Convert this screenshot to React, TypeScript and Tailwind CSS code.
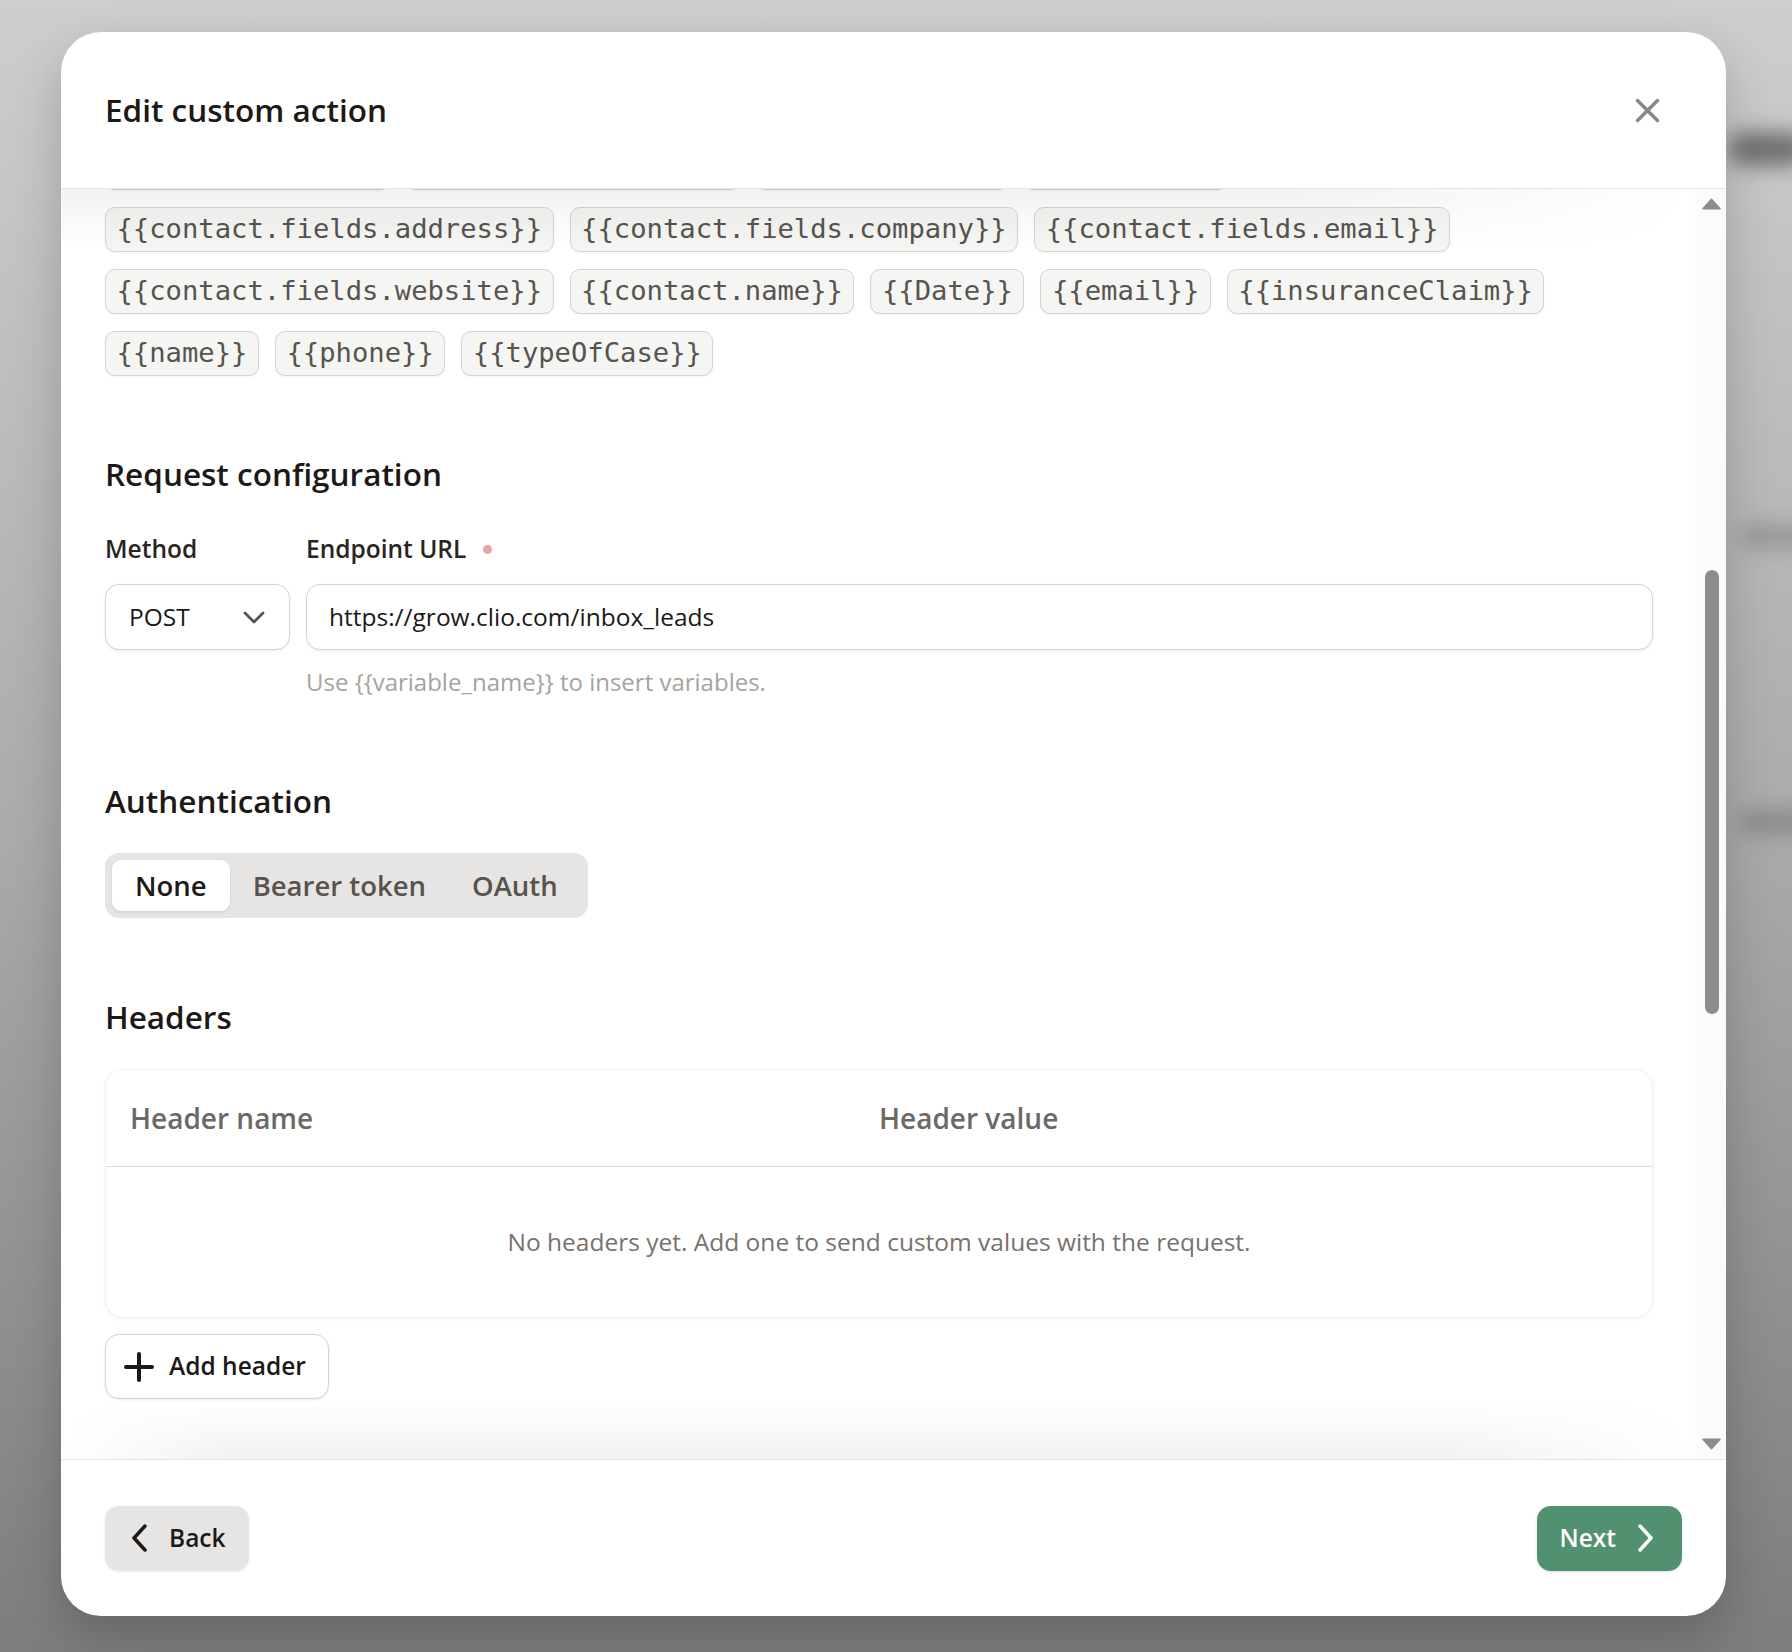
import { useState } from "react";

const hiddenRow = ["{{accidentDate}}", "{{caseDescription}}", "{{clientType}}", "{{company}}"];

const variables = [
  "{{contact.fields.address}}",
  "{{contact.fields.company}}",
  "{{contact.fields.email}}",
  "{{contact.fields.website}}",
  "{{contact.name}}",
  "{{Date}}",
  "{{email}}",
  "{{insuranceClaim}}",
  "{{name}}",
  "{{phone}}",
  "{{typeOfCase}}",
];

const authModes = ["None", "Bearer token", "OAuth"];

function Chip({ label }: { label: string }) {
  return (
    <span className="flex h-[45px] items-center rounded-[10px] border border-[#d6d3d1] bg-[#f5f5f4] px-[10.5px] font-['DejaVu_Sans_Mono',monospace] text-[27.2px] text-[#57534e] shadow-[0_1px_2px_rgba(0,0,0,0.06)]">
      {label}
    </span>
  );
}

function SectionTitle({ children }: { children: string }) {
  return <h3 className="text-[31.5px] font-semibold leading-[40px] text-[#1c1917]">{children}</h3>;
}

function Chevron({ dir, className }: { dir: "left" | "right"; className?: string }) {
  return (
    <svg viewBox="0 0 18 30" className={className} fill="none" stroke="currentColor" strokeWidth={3.5} strokeLinecap="round" strokeLinejoin="round">
      <path d={dir === "left" ? "M15 3 L4 15 L15 27" : "M3 3 L14 15 L3 27"} />
    </svg>
  );
}

export default function App() {
  const [auth, setAuth] = useState("None");

  return (
    <div className="relative min-h-screen w-full overflow-hidden bg-gradient-to-b from-[#cfcecc] via-[#acabaa] to-[#7d7d7d] pl-[61px] pt-[32px] font-['Open_Sans',sans-serif]">
      {/* blurred page behind the dialog */}
      <div className="pointer-events-none absolute left-[1728px] top-[132px] h-[34px] w-[80px] rounded-full bg-[#707070] blur-[10px]" />
      <div className="pointer-events-none absolute left-[1740px] top-[524px] h-[24px] w-[70px] rounded-full bg-[#979797] blur-[10px]" />
      <div className="pointer-events-none absolute left-[1740px] top-[810px] h-[24px] w-[70px] rounded-full bg-[#8a8a8a] blur-[10px]" />

      <div className="relative flex h-[1584px] w-[1665px] flex-col overflow-hidden rounded-[40px] bg-white shadow-[0_20px_50px_rgba(0,0,0,0.2)]">
        <div className="flex h-[157px] shrink-0 items-center justify-between border-b border-[#e7e5e4] pl-[44px] pr-[57px]">
          <h2 className="text-[31.5px] font-semibold leading-[40px] text-[#1c1917]">Edit custom action</h2>
          <button className="flex h-[44px] w-[44px] items-center justify-center text-[#8a8784]">
            <svg viewBox="0 0 25 25" className="h-[25px] w-[25px]" fill="none" stroke="currentColor" strokeWidth={3.5} strokeLinecap="round">
              <path d="M2.5 2.5 L22.5 22.5 M22.5 2.5 L2.5 22.5" />
            </svg>
          </button>
        </div>

        <div className="relative flex min-h-0 flex-1">
          <div className="min-w-0 flex-1 overflow-hidden pl-[44px] pr-[42px]">
            <div className="-mt-[44px] mb-[17px] flex gap-x-[16px]">
              {hiddenRow.map((v) => (
                <Chip key={v} label={v} />
              ))}
            </div>
            <div className="flex flex-wrap gap-x-[16px] gap-y-[17px]">
              {variables.map((v) => (
                <Chip key={v} label={v} />
              ))}
            </div>

            <section className="mt-[78px]">
              <SectionTitle>Request configuration</SectionTitle>
              <div className="mt-[40px] grid grid-cols-[185px_1fr] gap-x-[16px]">
                <label className="text-[24.5px] font-semibold leading-[30px] text-[#292524]">Method</label>
                <label className="flex items-center text-[24.5px] font-semibold leading-[30px] text-[#292524]">
                  Endpoint URL
                  <span className="ml-[17px] h-[9px] w-[9px] rounded-full bg-[#eba4a4]" />
                </label>
                <div className="mt-[20px] flex h-[66px] items-center justify-between rounded-[14px] border border-[#d6d3d1] bg-white pl-[23px] pr-[24px] shadow-[0_1px_3px_rgba(0,0,0,0.08)]">
                  <span className="text-[24.5px] text-[#1c1917]">POST</span>
                  <svg viewBox="0 0 22 13" className="h-[13px] w-[22px] text-[#57534e]" fill="none" stroke="currentColor" strokeWidth={2.8} strokeLinecap="round" strokeLinejoin="round">
                    <path d="M2 2 L11 11 L20 2" />
                  </svg>
                </div>
                <div className="mt-[20px] flex h-[66px] items-center rounded-[14px] border border-[#d6d3d1] bg-white pl-[22px] shadow-[0_1px_3px_rgba(0,0,0,0.08)]">
                  <span className="text-[24.5px] text-[#1c1917]">https://grow.clio.com/inbox_leads</span>
                </div>
                <div />
                <p className="mt-[17px] text-[24px] leading-[30px] text-[#a8a29e]">
                  Use {"{{variable_name}}"} to insert variables.
                </p>
              </div>
            </section>

            <section className="mt-[84px]">
              <SectionTitle>Authentication</SectionTitle>
              <div className="mt-[32px] inline-flex h-[65px] rounded-[14px] bg-[#e7e5e4] p-[7px]">
                {authModes.map((m) => (
                  <button
                    key={m}
                    onClick={() => setAuth(m)}
                    className={
                      m === auth
                        ? "rounded-[9px] bg-white px-[23px] text-[27.5px] font-semibold text-[#1c1917] shadow-[0_1px_3px_rgba(0,0,0,0.1)]"
                        : "rounded-[9px] px-[23px] text-[27.5px] font-semibold text-[#57534e]"
                    }
                  >
                    {m}
                  </button>
                ))}
              </div>
            </section>

            <section className="mt-[79px]">
              <SectionTitle>Headers</SectionTitle>
              <div className="mt-[32px] rounded-[18px] border border-[#f2f1f0] bg-white shadow-[0_1px_4px_rgba(0,0,0,0.05)]">
                <div className="grid h-[97px] grid-cols-2 items-center border-b border-[#dcdad8] px-[24px] text-[28px] font-semibold text-[#6c6965]">
                  <span>Header name</span>
                  <span>Header value</span>
                </div>
                <div className="flex h-[150px] items-center justify-center text-[24.5px] text-[#78716c]">
                  No headers yet. Add one to send custom values with the request.
                </div>
              </div>
              <button className="mt-[16px] flex h-[65px] items-center gap-[14px] rounded-[14px] border border-[#d6d3d1] bg-white pl-[17px] pr-[22px] text-[24.5px] font-semibold text-[#1c1917] shadow-[0_1px_3px_rgba(0,0,0,0.08)]">
                <svg viewBox="0 0 32 32" className="h-[32px] w-[32px]" fill="none" stroke="currentColor" strokeWidth={4} strokeLinecap="round">
                  <path d="M16 3 V29 M3 16 H29" />
                </svg>
                Add header
              </button>
            </section>
          </div>

          <div className="flex w-[31px] shrink-0 flex-col items-center bg-[#fbfbfb] py-[9px] pl-[2px]">
            <svg viewBox="0 0 20 12" className="h-[12px] w-[19px] text-[#8e8c8a]" fill="currentColor">
              <path d="M10 1 L19 11 H1 Z" stroke="currentColor" strokeWidth={1.5} strokeLinejoin="round" />
            </svg>
            <div className="flex-1">
              <div className="mt-[360px] h-[444px] w-[14px] rounded-full bg-[#8e8c8a]" />
            </div>
            <svg viewBox="0 0 20 12" className="h-[12px] w-[19px] text-[#8e8c8a]" fill="currentColor">
              <path d="M1 1 H19 L10 11 Z" stroke="currentColor" strokeWidth={1.5} strokeLinejoin="round" />
            </svg>
          </div>

          <div className="pointer-events-none absolute left-0 right-[31px] top-0 h-[60px] bg-gradient-to-b from-[rgba(0,0,0,0.05)] to-transparent [mask-image:linear-gradient(to_right,black_75%,transparent)]" />
          <div className="pointer-events-none absolute bottom-0 left-0 right-[31px] h-[60px] bg-gradient-to-t from-[rgba(0,0,0,0.05)] to-transparent [mask-image:linear-gradient(to_right,transparent,black_10%,black_85%,transparent)]" />
        </div>

        <div className="flex h-[157px] shrink-0 items-center justify-between border-t border-[#e7e5e4] px-[44px]">
          <button className="flex h-[65px] items-center gap-[21px] rounded-[14px] bg-[#e7e5e4] pl-[25px] pr-[23px] text-[24.5px] font-semibold text-[#1c1917] shadow-[0_1px_3px_rgba(0,0,0,0.08)]">
            <Chevron dir="left" className="h-[30px] w-[18px]" />
            Back
          </button>
          <button className="flex h-[65px] items-center gap-[21px] rounded-[14px] bg-[#529170] pl-[23px] pr-[27px] text-[24.5px] font-semibold text-white shadow-[0_1px_3px_rgba(0,0,0,0.12)]">
            Next
            <Chevron dir="right" className="h-[30px] w-[18px]" />
          </button>
        </div>
      </div>
    </div>
  );
}
